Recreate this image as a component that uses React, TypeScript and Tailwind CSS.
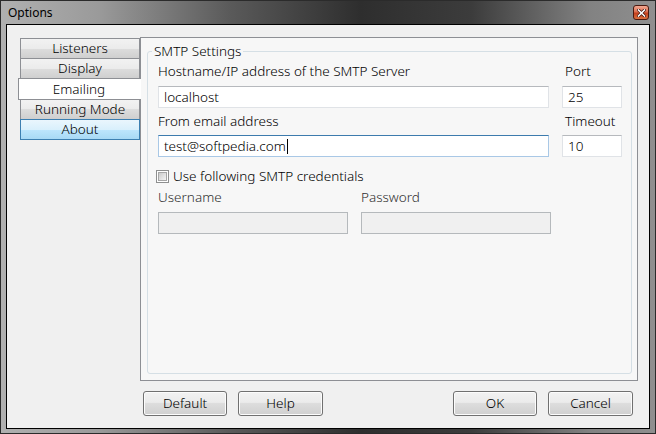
import React from 'react';

type TabProps = {
  label: string;
  state?: 'normal' | 'selected' | 'hover';
};

const Tab = ({ label, state = 'normal' }: TabProps) => {
  if (state === 'selected') {
    return (
      <div className="relative z-10 -mt-px -mr-px flex h-[22px] items-center justify-center border border-r-0 border-[#8d8f94] bg-white pr-[2px]">
        {label}
      </div>
    );
  }
  if (state === 'hover') {
    return (
      <div className="-mt-px ml-[2px] flex h-[21px] items-center justify-center border border-[#3c7fb1] bg-[linear-gradient(#eaf6fd,#d9f0fc_50%,#bee6fd_50%,#a7d9f5)]">
        {label}
      </div>
    );
  }
  return (
    <div className="-mt-px ml-[2px] flex h-[21px] items-center justify-center border border-[#8d8f94] bg-[linear-gradient(#f2f2f2,#ebebeb_50%,#dddddd_50%,#cfcfcf)] first:mt-0">
      {label}
    </div>
  );
};

type ButtonProps = { label: string; width: string };

const WinButton = ({ label, width }: ButtonProps) => (
  <button
    className={`${width} h-[25px] rounded-[3px] border border-[#707070] bg-[linear-gradient(#f2f2f2,#ebebeb_45%,#dddddd_50%,#cfcfcf)] font-light shadow-[inset_0_0_0_1px_#fcfcfc]`}
  >
    {label}
  </button>
);

const TextBox = ({ value = '', focused = false, disabled = false }: { value?: string; focused?: boolean; disabled?: boolean }) => {
  if (disabled) {
    return <div className="h-[22px] border border-[#b5b9bc] bg-[#f0f0f0]" />;
  }
  return (
    <div
      className={
        focused
          ? 'flex h-[22px] items-center border border-[#a9c8e6] border-t-[#3d7bad] bg-white pl-[5px]'
          : 'flex h-[22px] items-center border border-[#e0e3e7] border-t-[#b6b9bd] bg-white pl-[5px]'
      }
    >
      <span>{value}</span>
      {focused && <span className="ml-px h-[15px] w-px bg-black" />}
    </div>
  );
};

export default function App() {
  return (
    <div className="flex h-[434px] w-[656px] flex-col border border-[#2b2b2b] bg-[linear-gradient(90deg,#b0b0b0_0%,#9a9a9a_15%,#5a5a5a_35%,#2e2e2e_55%,#3c3c3c_72%,#828282_90%,#8f8f8f_100%)] px-[5px] pb-[4px] font-['Noto_Sans','Open_Sans',sans-serif] text-[13.5px] font-light text-black">
      {/* Title bar */}
      <div className="-mx-[5px] flex h-[23px] items-center justify-between pl-[7px] pr-[6px]">
        <span className="text-[12px] font-normal">Options</span>
        <div className="flex h-[15px] w-[16px] items-center justify-center rounded-[3px] border border-[#4b1a10] bg-[linear-gradient(#f3a993,#dc6e50_45%,#c4401e_55%,#d9713f)]">
          <svg width="9" height="8" viewBox="0 0 9 8">
            <path d="M1.5 1 L7.5 7 M7.5 1 L1.5 7" stroke="#3a1008" strokeWidth="3" strokeLinecap="square" />
            <path d="M1.5 1 L7.5 7 M7.5 1 L1.5 7" stroke="#ffffff" strokeWidth="1.6" strokeLinecap="square" />
          </svg>
        </div>
      </div>

      {/* Client area */}
      <div className="flex flex-1 flex-col border border-black bg-[#f0f0f0]">
        <div className="flex pl-[11px] pt-[12px]">
          {/* Tabs */}
          <div className="flex w-[122px] flex-col pt-px">
            <Tab label="Listeners" />
            <Tab label="Display" />
            <Tab label="Emailing" state="selected" />
            <Tab label="Running Mode" />
            <Tab label="About" state="hover" />
          </div>

          {/* Panel */}
          <div className="h-[344px] w-[498px] border border-[#8d8f94] bg-[#f7f7f7] pl-[6px] pr-[5px] pt-[4px]">
            <fieldset className="h-[332px] rounded-[3px] border border-[#d5dfe5] pl-[10px]">
              <legend className="-ml-[6px] px-[2px] leading-[18px]">SMTP Settings</legend>

              <div className="grid grid-cols-[391px_60px] gap-x-[13px]">
                <div className="mt-[2px] h-[18px] leading-[18px]">Hostname/IP address of the SMTP Server</div>
                <div className="mt-[2px] h-[18px] pl-[3px] leading-[18px]">Port</div>
                <div className="mt-[6px]"><TextBox value="localhost" /></div>
                <div className="mt-[6px]"><TextBox value="25" /></div>

                <div className="mt-[4px] h-[18px] leading-[18px]">From email address</div>
                <div className="mt-[4px] h-[18px] pl-[3px] leading-[18px]">Timeout</div>
                <div className="mt-[5px]"><TextBox value="test@softpedia.com" focused /></div>
                <div className="mt-[5px]"><TextBox value="10" /></div>
              </div>

              <div className="-ml-[2px] mt-[10px] flex h-[18px] items-center gap-[4px]">
                <span className="flex h-[13px] w-[13px] items-center justify-center border border-[#8e8f8f] bg-white">
                  <span className="h-[9px] w-[9px] border border-[#a6a6a6] bg-[linear-gradient(135deg,#cbcbcb,#f4f4f4)]" />
                </span>
                <span>Use following SMTP credentials</span>
              </div>

              <div className="grid grid-cols-[190px_190px] gap-x-[13px]">
                <div className="mt-[3px] h-[18px] leading-[18px] text-[#303030]">Username</div>
                <div className="mt-[3px] h-[18px] leading-[18px] text-[#303030]">Password</div>
                <div className="mt-[6px]"><TextBox disabled /></div>
                <div className="mt-[6px]"><TextBox disabled /></div>
              </div>
            </fieldset>
          </div>
        </div>

        {/* Buttons */}
        <div className="mt-[10px] flex justify-between pl-[136px] pr-[16px]">
          <div className="flex gap-[11px]">
            <WinButton label="Default" width="w-[84px]" />
            <WinButton label="Help" width="w-[85px]" />
          </div>
          <div className="flex gap-[11px]">
            <WinButton label="OK" width="w-[84px]" />
            <WinButton label="Cancel" width="w-[85px]" />
          </div>
        </div>
      </div>
    </div>
  );
}
